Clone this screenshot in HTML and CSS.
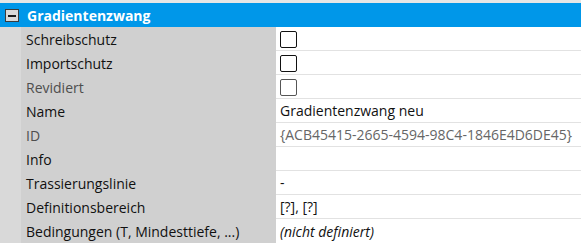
FILE: index.html
```html
<!DOCTYPE html>
<html lang="de">
<head>
<meta charset="utf-8">
<link rel="stylesheet" href="styles.css">
</head>
<body>
<div class="grid">
  <div class="topstrip"></div>
  <div class="header">
    <span class="toggle"><span class="minus"></span></span>
    <span class="title">Gradientenzwang</span>
  </div>
  <div class="rows">
    <div class="row"><div class="gutter"></div><div class="label">Schreibschutz</div><div class="value"><span class="check"></span></div></div>
    <div class="row"><div class="gutter"></div><div class="label">Importschutz</div><div class="value"><span class="check"></span></div></div>
    <div class="row"><div class="gutter"></div><div class="label muted">Revidiert</div><div class="value"><span class="check disabled"></span></div></div>
    <div class="row"><div class="gutter"></div><div class="label">Name</div><div class="value">Gradientenzwang neu</div></div>
    <div class="row"><div class="gutter"></div><div class="label muted">ID</div><div class="value muted">{ACB45415-2665-4594-98C4-1846E4D6DE45}</div></div>
    <div class="row"><div class="gutter"></div><div class="label">Info</div><div class="value"></div></div>
    <div class="row"><div class="gutter"></div><div class="label">Trassierungslinie</div><div class="value">-</div></div>
    <div class="row"><div class="gutter"></div><div class="label">Definitionsbereich</div><div class="value">[?], [?]</div></div>
    <div class="row"><div class="gutter"></div><div class="label">Bedingungen (T, Mindesttiefe, ...)</div><div class="value italic">(nicht definiert)</div></div>
  </div>
</div>
</body>
</html>
```
FILE: styles.css
```css
html, body {
  margin: 0;
  padding: 0;
  background: #ffffff;
}
body {
  font-family: "Open Sans", "Noto Sans", "DejaVu Sans", sans-serif;
  font-size: 14px;
  color: #111111;
  width: 581px;
  height: 243px;
  overflow: hidden;
}
.topstrip {
  height: 3px;
  background: #e6e6e6;
}
.header {
  height: 24px;
  background: #0097e9;
  display: flex;
  align-items: center;
  padding-left: 5px;
}
.toggle {
  width: 12px;
  height: 11px;
  border: 1px solid #3c3c3c;
  background: #d9d9d9;
  display: flex;
  align-items: center;
  justify-content: center;
  margin-right: 8px;
  margin-top: 1px;
}
.minus {
  width: 8px;
  height: 2px;
  background: #1a1a1a;
}
.title {
  color: #ffffff;
  font-weight: 700;
  font-size: 14px;
}
.row {
  display: flex;
  height: 24px;
}
.gutter {
  width: 21px;
  background: #d9d9d9;
  flex: none;
}
.label {
  width: 250px;
  background: #d0d0d0;
  padding-left: 5px;
  display: flex;
  align-items: center;
  white-space: nowrap;
  flex: none;
}
.value {
  flex: 1;
  display: flex;
  align-items: center;
  padding-left: 4px;
  border-bottom: 1px solid #e2e2e2;
  white-space: nowrap;
}
.row:last-child .value {
  border-bottom: none;
}
.muted {
  color: #4e4e4e;
}
.value.muted {
  color: #666666;
}
.italic {
  font-style: italic;
}
.check {
  width: 15px;
  height: 15px;
  border: 1.5px solid #111;
  border-radius: 2px;
  background: #fff;
  margin-top: 1px;
}
.check.disabled {
  border-color: #555;
}
```
